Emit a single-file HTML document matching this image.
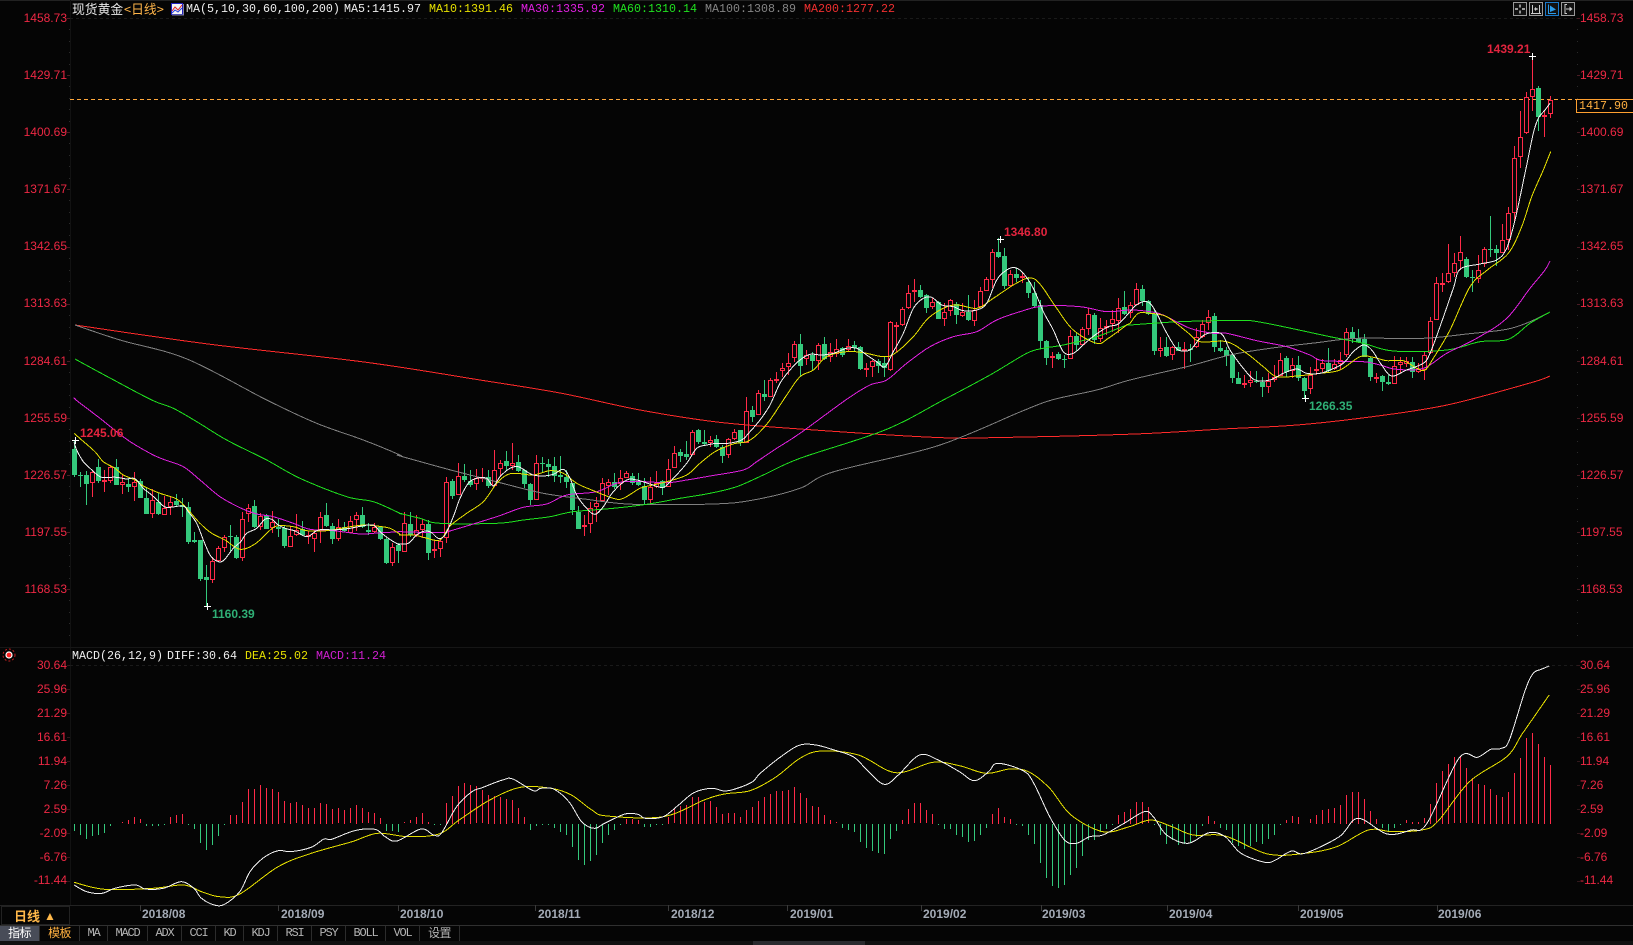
<!DOCTYPE html>
<html>
<head>
<meta charset="utf-8">
<title>现货黄金 日线</title>
<style>
html,body{margin:0;padding:0;background:#050505;}
#p{position:relative;width:1633px;height:945px;overflow:hidden;background:#050505;font-family:"Liberation Sans","Noto Sans CJK SC",sans-serif;}
#p span,#p div.a{position:absolute;white-space:nowrap;}
svg{position:absolute;left:0;top:0;}
.m{font-family:"Liberation Mono","Noto Sans CJK SC",monospace;font-size:11.67px;line-height:14px;height:14px;}
.l{left:0;width:67px;text-align:right;color:#ee2844;font-size:12px;line-height:14px;}
.r{left:1580px;color:#ee2844;font-size:12px;line-height:14px;}
.d{color:#a4abb6;font-weight:bold;font-size:12px;line-height:14px;top:907px;}
.pk{font-weight:bold;font-size:12px;line-height:14px;}
.t{top:926px;height:15px;line-height:15px;text-align:center;color:#b4b4b4;font-family:"Liberation Mono",monospace;font-size:12px;letter-spacing:-1.2px;border-right:1px solid #2c2c2c;box-sizing:border-box;}
.c{font-family:"Liberation Sans","Noto Sans CJK SC",sans-serif;letter-spacing:-.6px;}
</style>
</head>
<body>
<div id="p">
<svg id="s" width="1633" height="945" xmlns="http://www.w3.org/2000/svg"></svg>

<span class="m" style="left:72px;top:2px;color:#e8e8e8;font-size:12.8px;font-family:'Noto Sans CJK SC',sans-serif;">现货黄金</span>
<span class="m" style="left:124px;top:2px;color:#ffb54a;font-size:12.8px;font-family:'Noto Sans CJK SC',sans-serif;">&lt;日线&gt;</span>
<span class="m" style="left:186px;top:2px;color:#eee;">MA(5,10,30,60,100,200)</span>
<span class="m" style="left:344px;top:2px;color:#eee;">MA5:1415.97</span>
<span class="m" style="left:429px;top:2px;color:#e6e000;">MA10:1391.46</span>
<span class="m" style="left:521px;top:2px;color:#e020e0;">MA30:1335.92</span>
<span class="m" style="left:613px;top:2px;color:#20e020;">MA60:1310.14</span>
<span class="m" style="left:705px;top:2px;color:#858585;">MA100:1308.89</span>
<span class="m" style="left:804px;top:2px;color:#f03030;">MA200:1277.22</span>

<span class="l" style="top:11px">1458.73</span><span class="r" style="top:11px">1458.73</span>
<span class="l" style="top:68px">1429.71</span><span class="r" style="top:68px">1429.71</span>
<span class="l" style="top:125px">1400.69</span><span class="r" style="top:125px">1400.69</span>
<span class="l" style="top:182px">1371.67</span><span class="r" style="top:182px">1371.67</span>
<span class="l" style="top:239px">1342.65</span><span class="r" style="top:239px">1342.65</span>
<span class="l" style="top:296px">1313.63</span><span class="r" style="top:296px">1313.63</span>
<span class="l" style="top:354px">1284.61</span><span class="r" style="top:354px">1284.61</span>
<span class="l" style="top:411px">1255.59</span><span class="r" style="top:411px">1255.59</span>
<span class="l" style="top:468px">1226.57</span><span class="r" style="top:468px">1226.57</span>
<span class="l" style="top:525px">1197.55</span><span class="r" style="top:525px">1197.55</span>
<span class="l" style="top:582px">1168.53</span><span class="r" style="top:582px">1168.53</span>

<span class="m" style="left:1576px;top:99px;width:57px;height:14px;box-sizing:border-box;border:1px solid #ffa030;border-right:none;"></span>
<span class="m" style="left:1579px;top:99px;color:#ffb040;">1417.90</span>

<span class="pk" style="left:1487px;top:42px;color:#e2243e;">1439.21</span>
<span class="pk" style="left:1004px;top:225px;color:#e2243e;">1346.80</span>
<span class="pk" style="left:80px;top:426px;color:#e2243e;">1245.06</span>
<span class="pk" style="left:212px;top:607px;color:#2fb076;">1160.39</span>
<span class="pk" style="left:1309px;top:399px;color:#2fb076;">1266.35</span>

<span class="m" style="left:72px;top:649px;color:#eee;">MACD(26,12,9)</span>
<span class="m" style="left:167px;top:649px;color:#eee;">DIFF:30.64</span>
<span class="m" style="left:245px;top:649px;color:#e6e000;">DEA:25.02</span>
<span class="m" style="left:316px;top:649px;color:#d020d0;">MACD:11.24</span>

<span class="l" style="top:658px">30.64</span><span class="r" style="top:658px">30.64</span>
<span class="l" style="top:682px">25.96</span><span class="r" style="top:682px">25.96</span>
<span class="l" style="top:706px">21.29</span><span class="r" style="top:706px">21.29</span>
<span class="l" style="top:730px">16.61</span><span class="r" style="top:730px">16.61</span>
<span class="l" style="top:754px">11.94</span><span class="r" style="top:754px">11.94</span>
<span class="l" style="top:778px">7.26</span><span class="r" style="top:778px">7.26</span>
<span class="l" style="top:802px">2.59</span><span class="r" style="top:802px">2.59</span>
<span class="l" style="top:826px">-2.09</span><span class="r" style="top:826px">-2.09</span>
<span class="l" style="top:850px">-6.76</span><span class="r" style="top:850px">-6.76</span>
<span class="l" style="top:873px">-11.44</span><span class="r" style="top:873px">-11.44</span>

<span class="d" style="left:142px">2018/08</span>
<span class="d" style="left:281px">2018/09</span>
<span class="d" style="left:400px">2018/10</span>
<span class="d" style="left:538px">2018/11</span>
<span class="d" style="left:671px">2018/12</span>
<span class="d" style="left:790px">2019/01</span>
<span class="d" style="left:923px">2019/02</span>
<span class="d" style="left:1042px">2019/03</span>
<span class="d" style="left:1169px">2019/04</span>
<span class="d" style="left:1300px">2019/05</span>
<span class="d" style="left:1438px">2019/06</span>

<span style="left:14px;top:907px;color:#ffb84a;font-size:13px;font-weight:bold;line-height:18px;font-family:'Noto Sans CJK SC',sans-serif;">日线</span>
<span style="left:44px;top:907px;color:#ffb84a;font-size:12px;line-height:18px;">▲</span>

<span class="t c" style="left:0;width:40px;background:#484c58;color:#fff;">指标</span>
<span class="t c" style="left:40px;width:40px;color:#ffb040;">模板</span>
<span class="t" style="left:80px;width:28px;">MA</span>
<span class="t" style="left:108px;width:40px;">MACD</span>
<span class="t" style="left:148px;width:34px;">ADX</span>
<span class="t" style="left:182px;width:34px;">CCI</span>
<span class="t" style="left:216px;width:28px;">KD</span>
<span class="t" style="left:244px;width:34px;">KDJ</span>
<span class="t" style="left:278px;width:34px;">RSI</span>
<span class="t" style="left:312px;width:34px;">PSY</span>
<span class="t" style="left:346px;width:40px;">BOLL</span>
<span class="t" style="left:386px;width:34px;">VOL</span>
<span class="t c" style="left:420px;width:40px;">设置</span>
</div>
<script>
var S=[];
function R(x,y,w,h,c){S.push('<rect x="'+x+'" y="'+y+'" width="'+w+'" height="'+h+'" fill="'+c+'"/>');}
var BG='#050505',RED='#ff2a48',GRN='#34c97c';
// frame
R(0,0,1633,1,'#222');
R(70,0,1,905,'#121212');
R(0,647,1633,1,'#161616');R(0,905,1633,1,'#232323');R(0,925,1633,1,'#303030');
R(0,941,1633,4,'#111');R(753,941,112,4,'#2a2a2e');
R(1,906,68,1,'#222');R(1,924,68,1,'#222');R(1,906,1,19,'#222');R(69,906,1,19,'#222');
[140,278,398,535,668,787,921,1041,1167,1298,1437].forEach(function(x){R(x,905,1,6,'#3a3a3a');});
// ticks
for(var k=0;k<=10;k++){var y=Math.round(18+57.13*k);R(67,y,3,1,'#4a1c24');R(1577,y,3,1,'#4a1c24');
 for(var j=1;j<5;j++){var yy=Math.round(y+j*11.4);if(yy<640){R(69,yy,1,1,'#2a2a2a');R(1577,yy,1,1,'#2a2a2a');}}}
for(var k=0;k<10;k++){var y=665+24*k;R(67,y,3,1,'#32181c');R(1577,y,3,1,'#32181c');}
// dashed
S.push('<path d="M70 18.5H1577M70 665.5H1577" stroke="#1a1a1a" stroke-dasharray="3 3" fill="none"/>');
S.push('<path d="M70 99.5H1577" stroke="#ffa83c" stroke-dasharray="4 3" fill="none"/>');
// macd bars
var bars="573 585 597 587 585 577 556 552 547 540 531 538 557 557 558 553 530 526 521 555 567 608 630 615 588 553 525 525 487 447 447 435 443 447 456 484 488 487 495 503 503 489 491 506 505 509 505 495 505 517 519 533 572 572 576 547 541 530 519 545 555 555 489 467 438 429 435 439 451 465 467 470 477 481 503 530 570 557 553 553 562 575 585 620 660 675 663 645 608 585 570 553 537 537 539 561 561 553 553 530 508 497 494 470 470 485 483 502 522 520 518 532 510 502 483 470 462 452 452 450 442 459 475 498 501 525 539 547 563 570 575 605 624 632 637 642 597 572 540 507 490 490 511 522 553 565 567 585 590 604 603 585 563 522 504 532 537 553 558 585 612 668 713 737 743 733 705 682 647 600 600 575 565 553 525 515 507 485 485 502 555 585 610 600 613 612 607 590 557 528 542 562 570 608 617 625 617 605 610 597 585 553 541 529 531 550 538 525 510 508 505 495 465 457 456 477 513 537 562 572 562 553 541 545 546 535 492 430 392 372 352 352 385 415 432 435 447 465 470 456 398 353 293 280 312 351 375".split(' ');
bars.forEach(function(v,i){v=+v;var x=74+6*i;if(v<551)R(x,Math.round(640+v/3),1,Math.round((551-v)/3),RED);else R(x,824,1,Math.round((v-551)/3),GRN);});
// candles: top bottom high low colour
var G=[
[400,"148 224 120 230 G,224 228 215 260 G,225 252 213 314 G,215 250 212 290 R,201 242 178 250 G,240 245 210 275 R,202 243 196 250 R,201 254 178 256 G,247 254 225 282 R,253 260 235 275 G,247 260 216 303 R,243 293 238 295 G,293 341 265 342 G,300 341 268 355 R,306 343 280 345 G,325 344 288 345 R,307 322 290 345 R,303 316 283 322 G,316 322 295 350 G,322 426 305 431 G,421 425 395 430 G,420 537 420 542 G,532 539 495 620 G,482 539 470 548 R,445 482 438 485 R,412 443 405 455 R,408 412 375 455 G,411 473 405 478 G,358 473 335 483 R,324 343 312 366 R,318 382 300 385 G,348 380 340 390 R,347 387 342 388 G,367 383 334 398 R,380 386 358 410 G,385 438 378 445 G,408 440 380 440 R,390 404 343 408 R,388 404 362 408 G,405 412 392 433 R,398 416 390 455 R,352 390 335 428 R,345 378 310 380 G,378 416 370 432 G,380 418 358 424 R,380 392 365 395 G,364 400 347 400 R,346 361 335 392 R,345 382 320 385 G,390 396 370 405 G,381 396 370 400 R,381 418 378 420 G,418 489 415 491 G,442 488 430 497 R,436 452 430 490 G"],
[380,"430 515 397 515 R,432 465 397 470 G,450 465 405 470 R,432 450 418 475 R,432 518 420 540 G,508 512 480 535 R,482 508 475 530 R,306 475 290 490 R,303 348 298 357 G,289 344 250 345 R,288 300 252 305 G,304 316 270 320 G,294 313 268 330 R,292 295 264 305 R,291 318 270 325 G,270 318 210 320 R,250 266 240 290 R,243 259 213 270 G,250 258 190 270 R,246 273 225 275 G,270 313 268 325 G,312 360 308 375 G,250 359 225 360 R,250 253 232 278 G,253 262 238 290 G,258 288 230 305 G,285 290 228 310 G,291 306 270 325 G,310 390 308 405 G,395 447 378 448 G,436 442 405 468 R,385 431 365 458 R,370 381 350 425 R,310 364 295 365 R,307 317 298 345 R,306 320 278 328 G,295 312 270 330 R,280 293 272 295 R,289 310 280 315 G,305 315 280 318 G,318 360 295 375 G,320 360 292 375 R,308 320 272 325 R,304 325 300 345 G,268 320 237 322 R,220 263 198 265 R,216 228 208 245 G,222 232 183 240 G,157 224 150 226 R,150 186 148 192 G,186 193 150 195 G,179 190 168 200 R,178 200 165 205 G,202 228 195 250 G,178 224 175 233 R,157 177 148 180 R,150 190 150 198 G,94 188 50 190 R,90 110 78 126 G,40 104 30 106 R,42 50 0 63 G,0 50 -5 52 R,-2 3 -25 10 R"],
[220,"443 453 430 470 R,430 440 400 465 R,373 415 362 425 R,373 437 342 470 G,405 418 390 435 R,405 422 395 450 G,375 423 370 450 R,373 417 350 420 G,395 410 368 425 R,388 403 358 410 R,385 406 380 410 G,377 390 358 395 R,376 385 362 395 G,381 447 378 450 G,445 447 430 470 R,424 440 420 470 R,424 438 418 460 G,428 443 410 470 G,307 450 303 452 R,316 318 305 395 R,267 316 262 318 R,220 265 195 268 R,211 214 178 245 R,210 230 195 235 G,225 263 222 280 G,247 262 235 268 R,245 296 242 298 G,277 296 250 318 R,241 274 237 288 R,253 286 245 312 G,275 287 250 292 R,275 301 225 302 G,270 302 240 318 R,214 260 202 262 R,178 212 170 213 R,97 180 88 205 R,96 110 55 113 G,108 197 85 206 G,162 197 150 200 R,162 173 145 186 G,168 172 155 190 R,185 218 170 233 G,219 258 185 260 G,256 362 240 388 G,363 413 360 435 G,408 412 395 443 R,402 416 395 420 G,418 420 405 445 G,348 418 330 418 R,347 375 340 392 G,327 374 320 376 R,283 326 265 345 R,285 360 280 372 G,323 358 295 365 R,318 323 300 345 R,297 313 270 335 R,265 303 235 340 R,262 282 212 285 G,256 280 245 295 R,208 254 190 256 R,208 243 195 258 G,244 283 240 285 G,283 392 270 405 G,383 392 350 412 R,380 408 352 410 G,382 406 378 420 R"],
[270,"231 242 215 243 G,236 244 215 298 R,236 240 222 275 G,202 232 175 234 R,163 201 150 205 R,142 160 120 180 R,138 230 130 245 G,235 242 210 245 G,240 258 232 288 G,255 323 250 340 G,323 341 305 342 G,340 343 316 353 R,331 340 303 352 R,333 336 303 338 G,335 350 320 380 G,333 350 308 370 R,322 330 285 335 R,270 317 250 318 R,264 307 258 320 G,286 303 263 325 R,285 325 258 332 G,323 362 320 385 G,315 358 290 372 R,298 301 265 315 R,280 296 268 305 R,278 302 233 305 G,283 298 268 300 R,271 283 245 300 R,187 256 175 260 R,186 206 170 218 G,205 215 178 218 G,207 260 192 262 G,264 320 262 332 G,320 323 310 340 R,318 335 315 362 G,336 343 315 345 G,287 341 258 343 R,277 285 260 310 R,272 282 262 290 R,277 307 262 325 G,296 307 280 310 R,256 300 245 330 R,154 250 142 252 R,38 150 20 150 R,38 40 10 65 R"],
[0,"819 846 732 849 R,789 819 759 831 R,756 783 708 810 R,777 831 771 834 G,831 834 810 876 G,810 837 765 849 R"],
[40,"628 672 620 680 R,628 630 528 650 G,628 640 615 678 G,600 638 552 640 R,520 600 500 630 R,355 518 318 545 R,290 352 212 383 R,170 280 155 282 R,148 170 50 212 R,145 230 138 272 G,226 229 210 290 R,181 223 168 233 R"]
];
var idx=0;
G.forEach(function(g){var o=g[0];g[1].split(',').forEach(function(s){
 var a=s.split(' '),t=o+a[0]/3,b=o+a[1]/3,h=o+a[2]/3,l=o+a[3]/3,red=a[4]=='R',x=72+6*idx;
 t=Math.round(t);b=Math.round(b);h=Math.round(h);l=Math.round(l);
 var c=red?RED:GRN;
 R(x+2,h,1,Math.max(l-h,1),c);
 if(red){
  var H=Math.max(b-t,1);
  if(H<=2){R(x,t,5,2,c);}
  else{R(x,t,5,H,BG);S.push('<rect x="'+(x+.5)+'" y="'+(t+.5)+'" width="4" height="'+(H-1)+'" fill="none" stroke="'+c+'"/>');}
 }else R(x,t,5,Math.max(b-t,1),c);
 idx++;
});});
// lines (smoothed, aliased)
function L(c,segs){var p=[];segs.forEach(function(s){
 if(s.length==1){s[0].split(' ').forEach(function(q){q=q.split(',');p.push([+q[0],+q[1]]);});return;}
 s[3].split(' ').forEach(function(q){q=q.split(',');p.push([s[0]+q[0]/s[2],s[1]+q[1]/3]);});});
 var d='M'+p[0][0].toFixed(1)+' '+p[0][1].toFixed(1);
 for(var i=0;i<p.length-1;i++){
  var a=p[Math.max(i-1,0)],b=p[i],e=p[i+1],f=p[Math.min(i+2,p.length-1)];
  d+='C'+(b[0]+(e[0]-a[0])/6).toFixed(1)+' '+(b[1]+(e[1]-a[1])/6).toFixed(1)+' '+(e[0]-(f[0]-b[0])/6).toFixed(1)+' '+(e[1]-(f[1]-b[1])/6).toFixed(1)+' '+e[0].toFixed(1)+' '+e[1].toFixed(1);
 }
 S.push('<path fill="none" stroke="'+c+'" stroke-width="1" shape-rendering="crispEdges" d="'+d+'"/>');}
L('#ff2a2a',[["75,325 208,344 364,362 480,380 560,393 640,410 717,422 800,429 937,437.5 1000,437.5 1135,434 1223,429 1297,425 1370,417 1447,405 1530,383 1550,376"]]);
L('#808080',[["75,325 120,340 187,359"],[0,400,3,"800,0 950,70 1090,120 1200,165"],[400,380,3,"0,228 160,272 300,308 430,340 560,358 700,373 940,372 1060,360 1200,325"],["833,472 937,446 1020,412"],[780,220,3,"815,540 950,510"],[1130,270,3,"0,330 170,290 300,255 420,235 560,218 680,205 880,205 1010,192 1130,178 1200,155"],["1550,312"]]);
L('#1fe01f',[["75,359 110,378"],[0,400,3,"455,0 520,25 590,65 680,120 800,180 900,235 1040,290 1120,305 1200,340"],[400,380,3,"0,400 60,415 120,430 290,430 370,420 450,410 520,395 640,385 740,373 840,355 930,340 1010,320 1090,285 1200,235"],["885,430"],[780,220,3,"490,540 630,465 740,400 790,385 850,375 950,350 1040,315"],[1130,270,3,"0,165 150,155 330,152 400,158 600,200 700,220 790,243 950,240 1050,215 1135,208 1200,160"],["1550,312"]]);
L('#e020e0',[["75,398"],[0,400,3,"228,0 300,55 380,118 450,160 490,178 550,200 600,240 660,290 720,323 770,342 820,350 880,370 930,388 1000,392 1080,402 1120,400 1200,395"],[400,380,3,"0,455 120,458 160,450 290,410 370,382 440,372 500,345 590,335 670,305 800,308 860,300 930,288 1030,270 1070,245 1130,205 1200,160"],[780,220,3,"200,538 270,495 320,480 380,430 450,380 520,350 590,335 650,300 720,275 790,258 900,260 980,275"],[1130,270,3,"0,120 60,125 100,135 180,175 250,190 290,190 380,212 470,230 540,255 580,272 700,275 750,285 800,298 880,295 950,250 1040,205 1130,145 1200,55"],["1545,270 1550,261"]]);
L('#e6e000',[[0,400,3,"222,100 245,120 285,155 310,185 345,205 370,225 405,240 430,258 480,280 530,297 560,325 600,370 635,400 675,420 720,448 765,432 800,400 830,378 880,380 920,392 980,392 1040,382 1090,375 1130,378 1170,385 1200,403"],[400,380,3,"0,465 40,465 75,473 120,480 150,438 200,400 250,365 290,310 320,285 350,280 400,285 450,272 490,280 530,310 570,328 640,355 670,355 720,325 760,315 800,305 860,285 900,250 945,215 1000,192 1040,185 1070,165 1110,120 1160,45"],[780,220,3,"60,470 100,450 140,410 200,395 250,398 310,410 345,400 400,350 450,290 520,255 590,265 640,235 700,195 740,175 765,178 790,205 830,265 880,330 950,370 985,355 1040,315"],[1130,270,3,"0,160 25,130 60,130 110,140 170,185 210,215 290,215 350,250 400,290 440,320 500,318 570,310 630,300 690,260 730,262 770,272 820,272 860,295 885,300 910,265 960,180 1020,50"],[1400,40,3,"262,690 325,640 365,560 395,470 430,390 452,335"]]);
L('#f2f2f2',[[0,400,3,"222,125 230,150 250,185 270,205 300,230 320,232 350,232 380,237 405,236 430,265 455,285 490,318 510,322 550,318 565,335 590,370 610,420 630,465 650,483 670,482 700,445 722,425 740,400 770,385 795,358 815,358 835,375 855,385 885,393 920,410 950,392 975,388 1000,390 1050,385 1085,378 1120,375 1140,395 1165,415 1195,433"],[400,380,3,"0,492 25,490 50,465 75,453 95,458 115,475 135,465 160,410 180,355 205,310 230,295 260,295 280,318 300,290 330,265 355,260 380,275 400,285 430,288 460,283 490,268 510,295 530,345 560,385 585,403 610,380 640,335 680,300 710,300 750,312 790,322 820,295 860,250 890,205 920,195 950,190 985,190 1025,180 1050,155 1080,120 1110,75"],[780,220,3,"0,490 30,450 60,420 90,403 125,405 160,400 200,385 230,385 260,405 290,425 315,440 340,395 370,340 400,265 430,235 455,232 485,255 520,260 550,272 590,270 620,250 650,180 680,150 705,143 730,160 760,205 790,275 820,330 850,395 880,400 915,370 945,345 985,320 1015,312"],[1130,270,3,"0,125 15,108 40,95 60,100 80,130 100,170 125,215 145,240 180,240 210,205 235,190 275,192 300,240 340,295 375,330 420,330 460,310 500,297 530,310 570,310 600,300 640,280 670,245 700,225 725,240 755,285 785,318 830,300 880,280 900,250 930,170 970,55"],[1400,40,3,"180,688 240,672 290,660 320,625 345,540 375,400 400,280 415,235 435,210 450,190"]]);
// macd lines
L('#e6e000',[[0,640,1.96,"145,727 205,748 300,745 360,735 395,755 430,770 470,762 545,680 610,640 690,605 740,580 800,590 860,582 900,540 960,480 1020,442 1080,445 1120,465 1160,510 1190,528 1300,530 1380,480 1420,462 1470,452 1520,412"],[800,640,1.882,"0,355 40,333 110,345 180,398 250,367 300,377 350,400 395,387 430,395 470,445 510,525 570,575 620,560 660,540 700,560 740,585 800,588 880,642 950,640 1010,620 1070,570 1115,575 1170,570 1200,545 1260,425 1330,350 1360,280 1410,165"]]);
L('#f2f2f2',[[0,640,1.96,"145,735 170,755 200,760 225,745 265,735 285,747 320,745 355,725 380,745 395,775 420,795 440,793 470,755 490,695 515,655 545,632 570,635 610,622 635,597 650,598 695,572 735,568 755,590 778,603 825,567 850,585 865,580 895,500 925,455 945,443 985,420 1005,417 1045,452 1060,445 1085,447 1115,485 1140,545 1165,565 1185,550 1225,522 1250,523 1265,535 1300,530 1330,495 1360,458 1395,445 1420,453 1445,445 1475,425 1490,400 1535,345"],[800,640,1.882,"0,315 30,315 60,328 100,350 125,388 158,433 185,405 225,345 260,360 300,395 328,422 355,395 372,370 420,392 440,430 470,530 498,600 520,610 545,590 570,585 610,550 648,515 665,530 690,585 730,610 770,578 800,590 830,640 875,667 895,660 925,633 950,640 1015,590 1050,535 1105,582 1150,570 1180,550 1240,355 1275,352 1300,328 1320,325 1335,300 1365,150 1380,100 1395,88 1410,78"]]);
// crosses
[[1532,56],[1000,239],[75,440],[207,606],[1305,398]].forEach(function(p){R(p[0]-3,p[1],7,1,'#fff');R(p[0],p[1]-3,1,7,'#fff');});
// MACD indicator dot
S.push('<circle cx="9" cy="655" r="3" fill="#ff2020" stroke="#fff" stroke-width="1.2"/><circle cx="9" cy="655" r="6" fill="none" stroke="#c02020" stroke-dasharray="2 2"/>');
// MA icon
S.push('<rect x="171.5" y="3.5" width="11" height="11" fill="#f4f4f4" stroke="#2020c0"/><path d="M172 11L175 7L178 10L182 5" stroke="#e02020" fill="none"/><path d="M172 13L175 10L178 12L182 8" stroke="#2040e0" fill="none"/><path d="M183.5 4V15H172" stroke="#8080a0" fill="none"/>');
// top buttons
function btn(x,c,inner){S.push('<rect x="'+(x+.5)+'" y="2.5" width="13" height="13" fill="#111" stroke="'+c+'"/>'+inner);}
btn(1513,'#999','<path d="M1520 4.5V7.5M1520 10.5V13.5M1515 9H1518M1522 9H1525" stroke="#ccc" fill="none" stroke-width="1.4"/>');
btn(1529,'#999','<path d="M1532.5 5V13M1539.5 5V13M1531 13.5H1541M1534 9H1538" stroke="#ccc" fill="none"/><path d="M1535 7L1537.5 9L1535 11Z" fill="#ccc"/>');
btn(1545,'#1a78c8','<path d="M1548.5 4.5V13.5H1556" stroke="#2a9be8" fill="none"/><path d="M1550 5.5L1556 9.5L1550 12Z" fill="#2a9be8"/>');
btn(1561,'#999','<path d="M1565 4V14M1566 9H1572" stroke="#ccc" fill="none"/><path d="M1569.5 6.5L1572.5 9L1569.5 11.5Z" fill="#ccc"/><path d="M1565 4.5H1567M1565 13.5H1567" stroke="#ccc"/>');
document.getElementById('s').innerHTML=S.join('');
</script>
</body>
</html>
